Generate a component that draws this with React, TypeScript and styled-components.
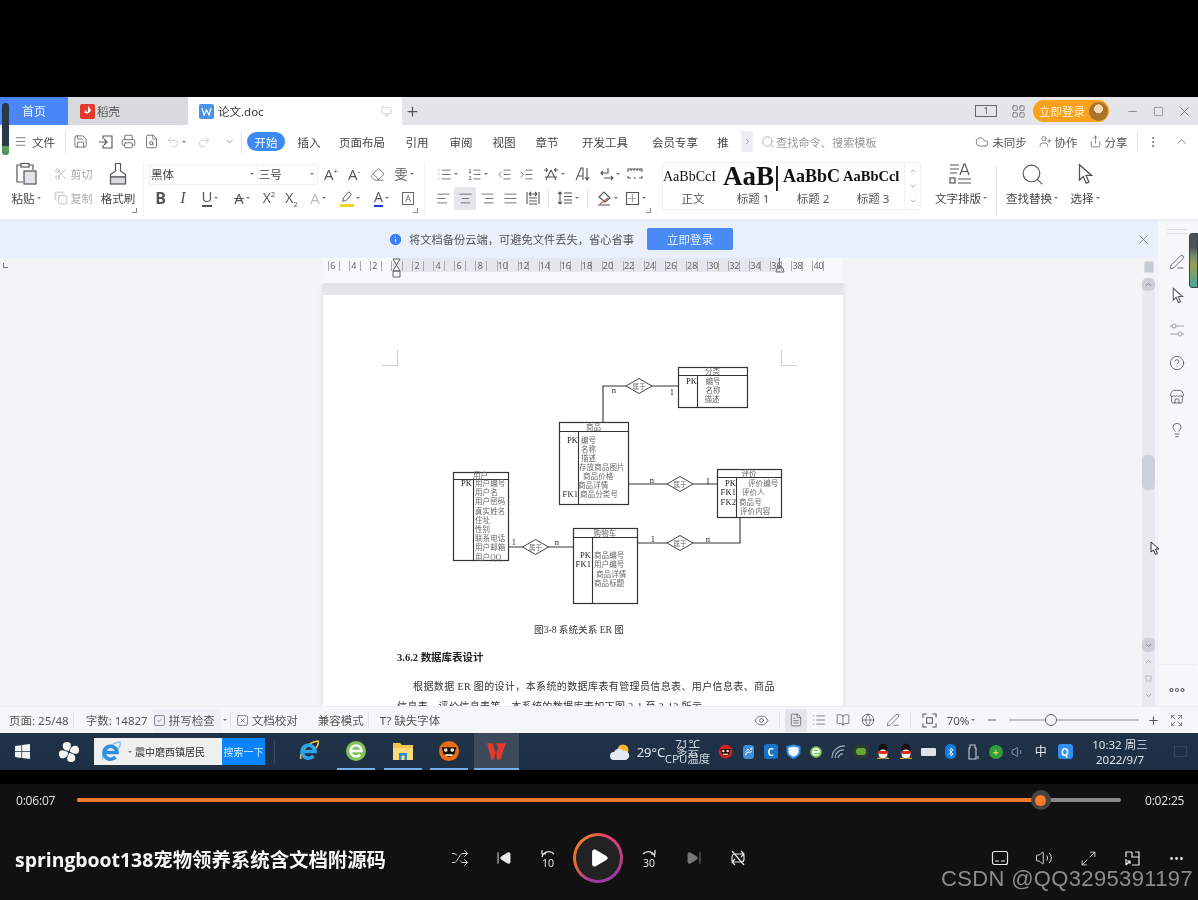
import React from 'react';
import styled, { createGlobalStyle } from 'styled-components';
import {
  Save, Printer, Undo2, Redo2, ChevronDown, Menu, Scissors, Copy, List, ListOrdered,
  IndentDecrease, IndentIncrease, AlignLeft, AlignCenter, AlignRight, AlignJustify, Eraser, Search,
  Cloud, UserPlus, Share, MoreVertical, ChevronUp, X, Plus, Minus, Monitor, LayoutGrid, Eye, FileText,
  BookOpen, Globe, PenLine, Shuffle, Volume2, Maximize2, MoreHorizontal, HelpCircle, Store,
  Lightbulb, ChevronRight, Square, FileSearch, Info, SquareCheck, SquareX, Expand, SkipBack, SkipForward, Play, Usb, Bluetooth, Volume1,
} from 'lucide-react';

const Global = createGlobalStyle`
  html, body { margin: 0; padding: 0; background: #000; }
  * { box-sizing: border-box; }
  body { font-family: "Noto Sans", "Noto Sans CJK SC", sans-serif; }
`;

const Root = styled.div`
  width: 1198px; height: 900px; overflow: hidden; display: flex; flex-direction: column;
  background: #000; position: relative; filter: blur(0.45px);
`;
const TopBlack = styled.div`height: 97px; flex: none; background: #000;`;
const AppWin = styled.div`height: 636px; flex: none; display: flex; flex-direction: column; background: #fff; color: #444; position: relative;`;

const TabBar = styled.div`height: 28px; flex: none; background: #e3e5e8; display: flex; align-items: stretch;`;
const HomeTab = styled.div`width: 68px; background: #4a86f7; color: #e9f0ff; font-size: 12px; display: flex; align-items: center; justify-content: center;`;
const GreyTab = styled.div`width: 120px; background: #d8dadd; color: #555; font-size: 11.5px; display: flex; align-items: center; gap: 2px; padding-left: 12px;`;
const DocTab = styled.div`width: 214px; background: #fff; color: #333; font-size: 11.5px; display: flex; align-items: center; gap: 4px; padding: 0 10px 0 11px;`;
const TabGrow = styled.div`flex: 1;`;
const Badge = styled.span<{ $bg: string }>`width: 15px; height: 15px; border-radius: 2px; background: ${p => p.$bg}; display: flex; align-items: center; justify-content: center; flex: none;`;
const AddTab = styled.div`width: 20px; display: flex; align-items: center; justify-content: center; color: #555;`;
const WinCell = styled.div<{ $w: number }>`width: ${p => p.$w}px; display: flex; align-items: center; justify-content: center; color: #666;`;
const LoginPill = styled.div`width: 76px; height: 22px; align-self: center; border-radius: 11px; background: #f9a11b; color: #fff3dd; font-size: 11.5px; display: flex; align-items: center; justify-content: space-between; padding: 0 1px 0 6px; margin-right: 8px;`;
const Avatar = styled.span`width: 19px; height: 19px; border-radius: 50%; background: radial-gradient(circle at 50% 36%, #f3d9ae 0 28%, #a9752d 30% 100%); display: block;`;
const VLine = styled.span<{ $h?: number; $m?: number }>`width: 1px; height: ${p => p.$h ?? 20}px; background: #e2e3e6; margin: 0 ${p => p.$m ?? 0}px; flex: none; align-self: center;`;
const FaintBox = styled.span`width: 22px; height: 12px; border: 1px solid #666; font-size: 9px; line-height: 10px; text-align: center; color: #555; display: block;`;

const ToolRow = styled.div`height: 33px; flex: none; display: flex; align-items: center; background: #fff;`;
const FileBtn = styled.div`width: 65px; display: flex; align-items: center; gap: 5px; padding-left: 14px; font-size: 11.5px; color: #444;`;
const ToolIcon = styled.div<{ $w?: number; $muted?: boolean }>`width: ${p => p.$w ?? 23}px; display: flex; align-items: center; justify-content: center; color: ${p => (p.$muted ? '#bbb' : '#555')}; flex: none;`;
const Pill = styled.div`width: 38px; height: 19px; margin-left: 3px; border-radius: 10px; background: #3d8bf2; color: #fff; font-size: 11.5px; display: flex; align-items: center; justify-content: center; flex: none;`;
const MenuTab = styled.div<{ $w: number }>`width: ${p => p.$w}px; font-size: 11.5px; color: #444; text-align: center; flex: none; white-space: nowrap;`;
const MoreBox = styled.div`width: 12px; height: 21px; background: #eceef1; color: #666; display: flex; align-items: center; justify-content: center; flex: none;`;
const SearchBox = styled.div`display: flex; align-items: center; gap: 1px; margin-left: 8px; font-size: 11.2px; color: #999; white-space: nowrap;`;
const RightTools = styled.div`margin-left: auto; display: flex; align-items: center; font-size: 11.5px; color: #555;`;
const RightAction = styled.div<{ $w: number }>`width: ${p => p.$w}px; display: flex; align-items: center; justify-content: center; gap: 3px; white-space: nowrap;`;

const Ribbon = styled.div`height: 62px; flex: none; display: flex; background: #fff; border-bottom: 1px solid #eceef1; padding-top: 4px; box-shadow: 0 1px 2px rgba(0,0,0,.04); position: relative;`;
const Group = styled.div<{ $w: number; $pl?: number; $line?: boolean; $mark?: boolean }>`
  width: ${p => p.$w}px; padding-left: ${p => p.$pl ?? 0}px; height: 54px; flex: none; position: relative;
  border-right: ${p => (p.$line ? '1px solid #eff0f2' : '0')};
  &::after { content: ''; display: ${p => (p.$mark ? 'block' : 'none')}; position: absolute; right: 6px; bottom: 3px; width: 4px; height: 4px; border-right: 1px solid #888; border-bottom: 1px solid #888; }
`;
const GroupRow = styled.div`height: 24px; display: flex; align-items: center;`;
const GroupCols = styled.div`display: flex;`;
const BigCol = styled.div<{ $w: number; $ml?: number }>`width: ${p => p.$w}px; margin-left: ${p => p.$ml ?? 0}px; display: flex; flex-direction: column; align-items: center; flex: none;`;
const BigIcon = styled.div`height: 24px; display: flex; align-items: center; justify-content: center; color: #555;`;
const BigLabel = styled.div`height: 24px; display: flex; align-items: center; font-size: 11.5px; color: #444; white-space: nowrap;`;
const Micro = styled.span`display: inline-block; width: 0; height: 0; border-left: 2px solid transparent; border-right: 2px solid transparent; border-top: 2.5px solid #777; margin-left: 2px; flex: none;`;
const SmallAct = styled.div`height: 24px; display: flex; align-items: center; gap: 3px; font-size: 11px; color: #aaa;`;
const FontBox = styled.div`width: 169px; height: 21px; border: 1px solid #eceef1; border-radius: 2px; display: flex; font-size: 11.5px; color: #444; flex: none;`;
const FontPart = styled.div<{ $w: number }>`width: ${p => p.$w}px; display: flex; align-items: center; justify-content: space-between; padding: 0 3px 0 1px; & + & { border-left: 1px solid #eceef1; }`;
const GlyphCell = styled.div<{ $w: number; $active?: boolean; $color?: string }>`
  width: ${p => p.$w}px; height: 23px; display: flex; align-items: center; justify-content: center; flex: none;
  color: ${p => p.$color ?? '#555'}; background: ${p => (p.$active ? '#e4e6ea' : 'transparent')}; border-radius: 2px;
`;
const Letter = styled.span<{ $size?: number; $weight?: number; $italic?: boolean; $under?: string; $strike?: boolean; $serif?: boolean }>`
  font-family: ${p => (p.$serif ? '"Liberation Serif", serif' : '"Open Sans", "Noto Sans CJK SC", sans-serif')};
  font-size: ${p => p.$size ?? 15}px; font-weight: ${p => p.$weight ?? 400}; font-style: ${p => (p.$italic ? 'italic' : 'normal')};
  line-height: 1; text-decoration: ${p => (p.$strike ? 'line-through' : 'none')};
  border-bottom: ${p => (p.$under ? `2px solid ${p.$under}` : '0')}; padding-bottom: ${p => (p.$under ? 1 : 0)}px;
  sup, sub { font-size: 8px; line-height: 0; }
`;
const HighlightBar = styled.span`display: flex; border-bottom: 3px solid #f2d229; line-height: 0;`;
const StyleBox = styled.div`width: 259px; height: 48px; margin-left: 5px; border: 1px solid #eef0f2; border-radius: 2px; display: flex; flex: none;`;
const StyleCard = styled.div`width: 60px; display: flex; flex-direction: column; align-items: center; flex: none;`;
const StyleSample = styled.div<{ $size: number; $bold?: boolean }>`
  height: 27px; width: 60px; white-space: nowrap; font-family: "Liberation Serif", serif; color: #111;
  font-size: ${p => p.$size}px; font-weight: ${p => (p.$bold ? 700 : 400)}; line-height: 27px; text-align: left;
`;
const StyleName = styled.div`font-size: 11.5px; color: #555; line-height: 18px;`;
const StyleScroll = styled.div`width: 16px; margin-left: auto; border-left: 1px solid #f0f1f3; display: flex; flex-direction: column; align-items: center; justify-content: space-around; color: #888;`;

const Main = styled.div`flex: 1; min-height: 0; display: flex;`;
const Work = styled.div`flex: 1; min-width: 0; display: flex; flex-direction: column; background: #f3f4f7;`;
const Notice = styled.div`height: 38px; flex: none; background: #e9f0fb; display: flex; align-items: center; font-size: 11.25px; color: #555; padding-left: 388px;`;
const NoticeText = styled.span`margin-left: 6px; white-space: nowrap;`;
const NoticeBtn = styled.div`width: 86px; height: 22px; margin-left: 13px; background: #4a8af5; border-radius: 2px; color: #e8f0ff; font-size: 11.5px; display: flex; align-items: center; justify-content: center;`;
const NoticeClose = styled.div`margin-left: auto; width: 28px; display: flex; justify-content: center; color: #777;`;
const RulerRow = styled.div`height: 25px; flex: none; display: flex; position: relative;`;
const Corner = styled.div`width: 323px; padding: 5px 0 0 3px; flex: none; &::before { content: ''; display: block; width: 4px; height: 4px; border-left: 1px solid #777; border-bottom: 1px solid #777; }`;
const RulerStrip = styled.div`
  width: 520px; flex: none; display: flex; padding-left: 5px; position: relative; height: 25px;
  background: linear-gradient(to right, transparent 70px, #e4e7ee 70px, #e4e7ee 457px, transparent 457px) no-repeat 0 0 / 100% 14px, #f7f8fa;
`;
const RulerCell = styled.div`width: 21.07px; height: 14px; padding-right: 9.5px; flex: none; font-size: 9px; line-height: 14px; color: #666;`;
const RulerNum = styled.div`height: 10px; margin-top: 3px; line-height: 9px; border-left: 1px solid #aaa; border-right: 1px solid #aaa; text-align: center; padding-right: 2px; white-space: nowrap;`;
const RulerMark = styled.svg<{ $left: number }>`position: absolute; left: ${p => p.$left}px; top: 0;`;
const RulerRight = styled.div`flex: 1; display: flex; justify-content: flex-end; padding: 3px 3px 0 0;`;
const ScrollTop = styled.div`width: 10px; height: 12px; background: #c7ccd4; border: 1px solid #d8dbe0; border-radius: 1px;`;

const DocRow = styled.div`flex: 1; min-height: 0; display: flex;`;
const DocArea = styled.div`flex: 1; min-width: 0; padding-left: 323px; overflow: hidden;`;
const PageShadow = styled.div`width: 520px; height: 100%; display: flex; flex-direction: column; box-shadow: 0 0 5px rgba(0,0,0,.12);`;
const PageGap = styled.div`height: 12px; flex: none; background: linear-gradient(#dfe1e3, #e6e7e9);`;
const Page = styled.div`flex: 1; min-height: 0; background: #fff; overflow: hidden; position: relative; font-family: "Liberation Serif", "Noto Sans CJK SC", serif; color: #333;`;
const MarginRow = styled.div`display: flex; justify-content: space-between; padding: 55px 46px 0 59px; height: 71px;`;
const MarginMark = styled.span<{ $right?: boolean }>`
  width: 16px; height: 16px; display: block; border-bottom: 1px solid #ccc;
  border-right: ${p => (p.$right ? '0' : '1px solid #ccc')}; border-left: ${p => (p.$right ? '1px solid #ccc' : '0')};
`;
const ERWrap = styled.svg`display: block; margin-left: 117px; margin-top: -11px;`;
const Caption = styled.div`text-align: center; font-size: 9.6px; line-height: 14px; margin-top: 8px; padding-right: 8px; color: #333;`;
const Heading = styled.div`font-size: 10.5px; font-weight: 700; line-height: 14px; margin: 14px 0 0 74px; color: #222;`;
const Para = styled.div`font-size: 10px; line-height: 20px; margin: 12px 60px 0 74px; text-indent: 16px; color: #333; letter-spacing: .38px;`;

const Scroller = styled.div`width: 15px; flex: none; padding-right: 2px; display: flex; flex-direction: column; align-items: center; background: #f3f4f7;`;
const Track = styled.div`width: 13px; flex: 1; min-height: 0; background: #e6e8ee; display: flex; flex-direction: column; padding-bottom: 4px;`;
const Thumb = styled.div<{ $h: number; $mt?: number }>`height: ${p => p.$h}px; margin-top: ${p => p.$mt ?? 0}px; background: #ccd0d8; border-radius: 5px; color: #888; display: flex; align-items: center; justify-content: center; flex: none;`;
const StepIcon = styled.div<{ $mt: number }>`margin-top: ${p => p.$mt}px; height: 10px; color: #888; display: flex; align-items: center; justify-content: center; flex: none;`;

const SidePanel = styled.div`width: 41px; flex: none; background: #f6f7f9; border-left: 1px solid #eeeff2; display: flex; flex-direction: column; align-items: center; color: #555; padding-top: 9px; padding-right: 2px;`;
const Grip = styled.div`width: 20px; height: 5px; border-top: 1px solid #ddd; border-bottom: 1px solid #ddd;`;
const SideBtn = styled.div<{ $mt: number; $light?: boolean }>`margin-top: ${p => p.$mt}px; height: 18px; display: flex; align-items: center; justify-content: center; color: ${p => (p.$light ? '#999' : '#555')};`;
const SideFoot = styled.div`margin-top: auto; width: 100%; height: 42px; border-top: 1px solid #eceef1; display: flex; align-items: center; justify-content: center; color: #666; padding-top: 8px;`;
const Meter = styled.div`position: absolute; right: 0; top: 136px; width: 9px; height: 55px; border-radius: 3px 0 0 3px; background: linear-gradient(#4c5358 0 25%, #6f8a6c 40%, #99a050 60%, #56a58f 90%); border: 1px solid #3d4246;`;
const LeftMeter = styled.div`position: absolute; left: 2px; top: 6px; width: 7px; height: 52px; border-radius: 3px; background: linear-gradient(#2b3846 0 82%, #5fa65e 84%, #4c8b4d 100%);`;
const Pointer = styled.svg`position: absolute; left: 1150px; top: 444px;`;

const StatusBar = styled.div`height: 27px; flex: none; background: #f5f6f8; display: flex; align-items: center; font-size: 11.5px; color: #555; padding-left: 9px; border-top: 1px solid #eceef1;`;
const StatusText = styled.span<{ $ml?: number }>`margin-left: ${p => p.$ml ?? 0}px; white-space: nowrap; display: flex; align-items: center; gap: 3px;`;
const StatusHot = styled.div`margin-left: 5px; height: 23px; width: 68px; background: #edf1f7; display: flex; align-items: center; gap: 3px; white-space: nowrap; flex: none;`;
const StatusRight = styled.div`margin-left: auto; padding-right: 9px; display: flex; align-items: center; color: #555;`;
const StatusIcon = styled.div<{ $w: number; $active?: boolean }>`width: ${p => p.$w}px; height: 23px; display: flex; align-items: center; justify-content: center; flex: none; border-radius: 2px; background: ${p => (p.$active ? '#e2e5ea' : 'transparent')};`;
const SliderRail = styled.div`width: 130px; height: 2px; background: #bfc2c7; margin: 0 4px; position: relative; flex: none;`;
const SliderKnob = styled.span`position: absolute; left: 36px; top: -5px; width: 12px; height: 12px; border-radius: 50%; background: #f5f6f8; border: 1px solid #666;`;

const Taskbar = styled.div`height: 37px; flex: none; background: linear-gradient(#1f3248, #203044); display: flex; align-items: stretch; color: #e8edf3;`;
const TaskCell = styled.div<{ $w: number }>`width: ${p => p.$w}px; flex: none; display: flex; align-items: center; justify-content: center;`;
const TaskSearch = styled.div`width: 171px; height: 27px; align-self: center; margin-left: 1px; display: flex; flex: none; font-size: 10px;`;
const TaskInput = styled.div`width: 128px; background: #f0f0f0; color: #333; display: flex; align-items: center; gap: 3px; padding-left: 5px; white-space: nowrap;`;
const TaskGo = styled.div`flex: 1; background: #0a84ff; color: #d8ecff; display: flex; align-items: center; justify-content: center; white-space: nowrap;`;
const TaskDiv = styled.span`width: 1px; height: 22px; align-self: center; background: #3b4c60; margin: 0 15px 0 9px; flex: none;`;
const AppSlot = styled.div<{ $w: number; $ml?: number; $line?: boolean; $active?: boolean }>`
  width: ${p => p.$w}px; margin-left: ${p => p.$ml ?? 0}px; flex: none; display: flex; align-items: center; justify-content: center;
  border-bottom: 2px solid ${p => (p.$line ? '#6fb0e8' : 'transparent')}; background: ${p => (p.$active ? '#3d4a5a' : 'transparent')};
`;
const TaskRight = styled.div`margin-left: auto; display: flex; align-items: stretch;`;
const Temp = styled.div`width: 37px; font-size: 13px; display: flex; align-items: center; justify-content: center; white-space: nowrap; color: #dfe5ec; flex: none;`;
const WeatherStack = styled.div`width: 36px; margin-right: 9px; flex: none; display: flex; flex-direction: column; align-items: center; justify-content: center; font-size: 11.5px; line-height: 7.5px; color: #cfd6de; white-space: nowrap;`;
const TrayCell = styled.div`width: 22.5px; display: flex; align-items: center; justify-content: center; flex: none;`;
const Clock = styled.div`width: 84px; font-size: 11.5px; line-height: 15px; text-align: center; color: #dfe5ec; display: flex; flex-direction: column; justify-content: center; flex: none; white-space: nowrap;`;
const DeskBtn = styled.div`width: 36px; display: flex; align-items: center; justify-content: center; flex: none; &::before { content: ''; width: 11px; height: 9px; border: 1px solid #33465a; }`;

const BlackGap = styled.div`height: 14px; flex: none; background: #000;`;
const Player = styled.div`flex: 1; min-height: 0; background: #111; display: flex; flex-direction: column; color: #eee;`;
const ProgressRow = styled.div`height: 32px; flex: none; display: flex; align-items: center; font-family: "Open Sans", sans-serif; font-size: 12px; letter-spacing: -.2px; color: #e4e4e4;`;
const TimeLeft = styled.div`width: 77px; padding-left: 16px; flex: none;`;
const Bar = styled.div`width: 1044px; height: 4px; border-radius: 2px; background: #888; flex: none; display: flex; align-items: center;`;
const Fill = styled.div`height: 4px; border-radius: 2px; background: #ff7a2b; flex: none;`;
const Knob = styled.div`width: 20px; height: 20px; border-radius: 50%; margin-left: -9px; background: #444; display: flex; align-items: center; justify-content: center; flex: none; &::after { content: ''; width: 11px; height: 11px; border-radius: 50%; background: #ff7a2b; }`;
const TimeRight = styled.div`margin-left: 24px; flex: none; white-space: nowrap;`;
const ControlRow = styled.div`flex: 1; display: flex; align-items: center;`;
const Title = styled.div`width: 438px; padding-left: 15px; flex: none; font-size: 19.4px; font-weight: 700; color: #f6f6f6; white-space: nowrap; font-family: "Open Sans", "Noto Sans CJK SC", sans-serif;`;
const Ctl = styled.div<{ $w?: number; $dim?: boolean }>`width: ${p => p.$w ?? 44}px; flex: none; display: flex; align-items: center; justify-content: center; color: ${p => (p.$dim ? '#777' : '#e8e8e8')};`;
const PlayRing = styled.div`width: 50px; height: 50px; border-radius: 50%; background: conic-gradient(from 20deg, #e0436a, #a23a9f 35%, #a23a9f 50%, #e86a2a 65%, #f08030 85%, #e0436a); display: flex; align-items: center; justify-content: center;`;
const PlayCore = styled.div`width: 44px; height: 44px; border-radius: 50%; background: #222; display: flex; align-items: center; justify-content: center; color: #fff; padding-left: 2px;`;
const ControlRight = styled.div`margin-left: auto; display: flex;`;
const Watermark = styled.div`position: absolute; right: 5px; bottom: 7px; font-family: "Liberation Sans", sans-serif; font-size: 22px; line-height: 28px; color: #8c8c8c; letter-spacing: .35px; white-space: nowrap;`;
const Rounded = styled.span<{ $bg: string; $w?: number; $h?: number; $r?: number; $fg?: string }>`
  width: ${p => p.$w ?? 15}px; height: ${p => p.$h ?? 15}px; background: ${p => p.$bg}; border-radius: ${p => p.$r ?? 3}px;
  display: flex; align-items: center; justify-content: center; color: ${p => p.$fg ?? '#fff'}; font-size: 10px; font-weight: 700; flex: none;
`;
const FaintABox = styled.span`width: 12px; height: 13px; border: 1px solid #666; font-size: 9px; line-height: 11px; text-align: center; color: #666; display: block; font-family: "Open Sans", sans-serif;`;

const S = 1.25;
const Line = ({ d, s = 16, w = 1.1, c = 'currentColor', vb = 16 }: { d: string; s?: number; w?: number; c?: string; vb?: number }) => (
  <svg width={s} height={s} viewBox={`0 0 ${vb} ${vb}`} fill="none" stroke={c} strokeWidth={w}><path d={d} /></svg>
);
const Arrow = ({ s = 20, c = '#555' }: { s?: number; c?: string }) => (
  <svg width={s} height={s} viewBox="0 0 20 20" fill="none" stroke={c} strokeWidth="1.2"><path d="M5 1.500v14l3.500-3.200 2.500 6 2.500-1-2.500-6h5z" /></svg>
);
const PasteIcon = () => (
  <svg width="23" height="24" viewBox="0 0 23 24" fill="none" stroke="#555" strokeWidth="1.2">
    <path d="M6 3H2v17h6M14 3h4v5" /><rect x="6" y="1.500" width="8" height="3.500" />
    <rect x="9" y="9" width="12" height="13" fill="#e2e3e6" />
  </svg>
);
const BrushIcon = () => (
  <svg width="22" height="24" viewBox="0 0 22 24" fill="none" stroke="#555" strokeWidth="1.2">
    <path d="M8.500 1.500h5V9l5 3.500V15h-15v-2.500L8.500 9z" /><rect x="3.500" y="15" width="15" height="7" fill="#d8d9dc" />
  </svg>
);
const TextLayout = () => (
  <svg width="26" height="24" viewBox="0 0 26 24" fill="none" stroke="#555" strokeWidth="1.2">
    <path d="M2 3h9M2 7h9M2 11h7M12 13l4-11h1l4 11M13.500 9.500h6M10 17h13M10 21h13" /><rect x="2" y="16" width="5" height="5" />
  </svg>
);
const Seek = ({ label, flip }: { label: string; flip?: boolean }) => (
  <svg width="22" height="24" viewBox="0 0 22 24" fill="none" stroke="currentColor" strokeWidth="1.2">
    <g transform={flip ? 'matrix(-1 0 0 1 22 0)' : undefined}>
      <path d="M5 11a7 7 0 0 1 12-3M5 4v4h4" />
    </g>
    <text x="11" y="21" textAnchor="middle" fontSize="10.5" fill="currentColor" stroke="none" fontFamily="Open Sans, sans-serif">{label}</text>
  </svg>
);
const WpsW = ({ s = 14, c = '#e5392b' }: { s?: number; c?: string }) => (
  <svg width={s} height={s} viewBox="0 0 20 20"><path d="M1 3h5l3 10 2-6-2-4h9l-5 15h-3L9 11 7 18H5z" fill={c} /></svg>
);
const IEIcon = ({ c = '#2ea5e8', ring = '#f5c243' }: { c?: string; ring?: string }) => (
  <svg width="24" height="24" viewBox="0 0 24 24" fill="none">
    <path d="M4 20C2 14 11 3 21 2c1 3-1 6-3 8" stroke={ring} strokeWidth="1.6" />
    <path d="M6 12.500h12a6.500 6.500 0 1 0-1.600 4.500" stroke={c} strokeWidth="3.600" />
  </svg>
);
const GreenE = ({ s = 24 }: { s?: number }) => (
  <svg width={s} height={s} viewBox="0 0 24 24" fill="none">
    <circle cx="12" cy="12" r="10" fill="#7fc65a" />
    <path d="M6.500 12h11a5.500 5.500 0 1 0-1.400 3.600" stroke="#fff" strokeWidth="2.400" />
  </svg>
);
const Folder = () => (
  <svg width="22" height="20" viewBox="0 0 22 20"><path d="M1 2h7l2 2h11v15H1z" fill="#f5c64f" /><path d="M1 7h20v12H1z" fill="#ffdb7a" /><rect x="7" y="12" width="8" height="7" fill="#2f88d8" /><rect x="9.500" y="14.500" width="3" height="4.500" fill="#ffdb7a" /></svg>
);
const Bandit = ({ s = 22, bg = '#ea6a13' }: { s?: number; bg?: string }) => (
  <svg width={s} height={s} viewBox="0 0 24 24"><circle cx="12" cy="12" r="11" fill={bg} /><path d="M4 8h16l-2 7q-6 7-12 0z" fill="#111" /><circle cx="8.500" cy="11" r="2" fill="#f4e4c8" /><circle cx="15.500" cy="11" r="2" fill="#f4e4c8" /><rect x="8" y="15.500" width="8" height="2" fill="#f4e4c8" /></svg>
);
const Penguin = () => (
  <svg width="14" height="17" viewBox="0 0 14 17"><ellipse cx="7" cy="6" rx="4.500" ry="5.500" fill="#111" /><ellipse cx="7" cy="11" rx="4.500" ry="4.500" fill="#f2f2f2" /><path d="M1 15l4-1v2H1zM13 15l-4-1v2h4z" fill="#e0a020" /><path d="M2.500 8h9l1 2-3 1H4.500l-3-1z" fill="#d93025" /></svg>
);
const WifiFan = () => (
  <svg width="17" height="15" viewBox="0 0 17 15" fill="none" stroke="#a4afba" strokeWidth="1.2"><path d="M2 14a12 12 0 0 1 13-12M5 14a8 8 0 0 1 9-8M8 14a4.500 4.500 0 0 1 5-4" /></svg>
);

const ERText = ({ x, y, t, a, s, dark }: { x: number; y: number; t: string; a?: 'middle' | 'end'; s?: number; dark?: boolean }) => (
  <text x={x} y={y} fontSize={s ?? 7.5} textAnchor={a} fill={dark ? '#222' : '#666'} fontFamily="Liberation Serif, Noto Sans CJK SC, serif" letterSpacing=".1">{t}</text>
);

// diagram coordinates equal page coordinates minus (440, 355)
const boxes = [
  { x: 238, y: 12, w: 69, h: 40, head: 8, v: 19, title: '分类' },
  { x: 119, y: 67, w: 69, h: 82, head: 9, v: 19, title: '商品' },
  { x: 13, y: 117, w: 55, h: 88, head: 7, v: 20, title: '用户' },
  { x: 133, y: 173, w: 64, h: 75, head: 9, v: 19, title: '购物车' },
  { x: 277, y: 114, w: 64, h: 48, head: 8, v: 19, title: '评价' },
];
const diamonds = [{ x: 199, y: 31 }, { x: 240, y: 129 }, { x: 95.5, y: 192 }, { x: 240, y: 188 }];
const wires = ['M163 67V31H186M212 31H238', 'M188 129H228M253 129H277', 'M68 192H83M108 192H133', 'M197 188H228M253 188H300V162'];
type L = [number, number, string, ('middle' | 'end')?];
const erKeys: L[] = [
  [257, 29, 'PK', 'end'], [138, 88, 'PK', 'end'], [138, 142, 'FK1', 'end'], [32, 131, 'PK', 'end'],
  [151, 203, 'PK', 'end'], [151, 212, 'FK1', 'end'], [296, 131, 'PK', 'end'], [296, 140, 'FK1', 'end'], [296, 150, 'FK2', 'end'],
  [174, 38, 'n', 'middle'], [232, 40, '1', 'middle'], [212, 128, 'n', 'middle'], [268, 129, '1', 'middle'],
  [74, 190, '1', 'middle'], [117, 190, 'n', 'middle'], [213, 187, '1', 'middle'], [268, 187, 'n', 'middle'],
];
const erRows: L[] = [
  [273, 29, '编号', 'middle'], [273, 38, '名称', 'middle'], [272, 47, '描述', 'middle'],
  [141, 88, '编号'], [141, 97, '名称'], [141, 106, '描述'], [139, 115, '存放商品图片'], [143, 124, '商品价格'], [138, 133, '商品详情'], [140, 142, '商品分类号'],
  [35, 131, '用户编号'], [35, 140, '用户名'], [35, 149, '用户密码'], [35, 159, '真实姓名'], [35, 168, '住址'], [35, 177, '性别'], [35, 186, '联系电话'], [35, 195, '用户邮箱'], [35, 205, '用户QQ'],
  [154, 203, '商品编号'], [154, 212, '用户编号'], [156, 222, '商品详情'], [154, 231, '商品标题'],
  [308, 131, '评价编号'], [302, 140, '评价人'], [299, 150, '商品号'], [300, 159, '评价内容'],
];

const ER = () => (
  <ERWrap width="350" height="260" viewBox="0 0 350 260" fill="none">
    {wires.map(d => <path key={d} d={d} stroke="#333" strokeWidth="1.1" />)}
    {boxes.map(b => (
      <g key={b.title}>
        <rect x={b.x + .5} y={b.y + .5} width={b.w} height={b.h} stroke="#333" strokeWidth="1.2" fill="#fff" />
        <path d={`M${b.x} ${b.y + b.head + .5}H${b.x + b.w}M${b.x + b.v + .5} ${b.y + b.head}V${b.y + b.h}`} stroke="#333" strokeWidth="1.1" />
        <ERText x={b.x + b.w / 2} y={b.y + b.head - 1} t={b.title} a="middle" />
      </g>
    ))}
    {diamonds.map(d => (
      <g key={d.x + '-' + d.y}>
        <path d={`M${d.x - 13} ${d.y}L${d.x} ${d.y - 7.5}L${d.x + 13} ${d.y}L${d.x} ${d.y + 7.5}Z`} stroke="#444" fill="#fff" />
        <ERText x={d.x} y={d.y + 2.5} t="属于" a="middle" s={6.5} />
      </g>
    ))}
    {erRows.map(([x, y, t, a]) => <ERText key={`${x}-${y}-${t}`} x={x} y={y} t={t} a={a} />)}
    {erKeys.map(([x, y, t, a]) => <ERText key={`${x}-${y}-${t}`} x={x} y={y} t={t} a={a} s={8.5} dark />)}
  </ERWrap>
);

const rulerNums = ['6', '4', '2', '', '2', '4', '6', '8', '10', '12', '14', '16', '18', '20', '22', '24', '26', '28', '30', '32', '34', '36', '38', '40'];
const tabs: [string, number][] = [['插入', 48], ['页面布局', 58], ['引用', 52], ['审阅', 36], ['视图', 50], ['章节', 36], ['开发工具', 80], ['会员专享', 60], ['推', 36]];

export default function App() {
  return (
    <>
      <Global />
      <Root>
        <TopBlack />
        <AppWin>
          <TabBar>
            <HomeTab>首页</HomeTab>
            <GreyTab>
              <Badge $bg="#e5392b"><svg width="9" height="11" viewBox="0 0 9 11"><path d="M5 0v6a2 2 0 0 1-2-2L1 6a4 4 0 0 0 7-2z" fill="#fff" /></svg></Badge>
              稻壳
            </GreyTab>
            <DocTab>
              <Badge $bg="#4a92ea"><svg width="11" height="9" viewBox="0 0 11 9" fill="none" stroke="#fff" strokeWidth="1.2"><path d="M1 1l2 7 2.500-5L8 8l2-7" /></svg></Badge>
              论文.doc
              <TabGrow />
              <Monitor size={11} strokeWidth={S} color="#bbb" />
            </DocTab>
            <AddTab><Plus size={15} strokeWidth={2} /></AddTab>
            <TabGrow />
            <WinCell $w={36}><FaintBox>1</FaintBox></WinCell>
            <WinCell $w={29}><LayoutGrid size={15} strokeWidth={S} /></WinCell>
            <LoginPill>立即登录<Avatar /></LoginPill>
            <VLine $h={18} />
            <WinCell $w={29}><Minus size={13} strokeWidth={S} /></WinCell>
            <WinCell $w={23}><Square size={11} strokeWidth={S} /></WinCell>
            <WinCell $w={28}><X size={15} strokeWidth={S} /></WinCell>
          </TabBar>
          <ToolRow>
            <FileBtn><Menu size={13} strokeWidth={S} />文件</FileBtn>
            <VLine $h={22} />
            <ToolIcon $w={28}><Save size={15} strokeWidth={S} /></ToolIcon>
            <ToolIcon $w={23}><Line d="M5 5V2h9v12H5v-3M1 8h8M6 5l3 3-3 3" /></ToolIcon>
            <ToolIcon $w={23}><Printer size={15} strokeWidth={S} /></ToolIcon>
            <ToolIcon $w={23}><FileSearch size={15} strokeWidth={S} /></ToolIcon>
            <ToolIcon $w={26} $muted><Undo2 size={14} strokeWidth={S} /><Micro /></ToolIcon>
            <ToolIcon $w={30} $muted><Redo2 size={14} strokeWidth={S} /></ToolIcon>
            <ToolIcon $w={20}><ChevronDown size={11} strokeWidth={S} /></ToolIcon>
            <VLine $h={22} $m={2} />
            <Pill>开始</Pill>
            {tabs.map(([t, w]) => <MenuTab key={t} $w={w}>{t}</MenuTab>)}
            <MoreBox><ChevronRight size={9} strokeWidth={1.5} /></MoreBox>
            <SearchBox><Search size={14} strokeWidth={S} />查找命令、搜索模板</SearchBox>
            <RightTools>
              <RightAction $w={64}><Cloud size={14} strokeWidth={S} />未同步</RightAction>
              <RightAction $w={50}><UserPlus size={13} strokeWidth={S} />协作</RightAction>
              <RightAction $w={50}><Share size={13} strokeWidth={S} />分享</RightAction>
              <VLine $h={20} $m={4} />
              <RightAction $w={22}><MoreVertical size={14} strokeWidth={S} /></RightAction>
              <RightAction $w={34}><ChevronUp size={15} strokeWidth={S} /></RightAction>
            </RightTools>
          </ToolRow>
          <Ribbon>
            <Group $w={144} $line $mark>
              <GroupCols>
                <BigCol $w={32} $ml={10}><BigIcon><PasteIcon /></BigIcon><BigLabel>粘贴<Micro /></BigLabel></BigCol>
                <BigCol $w={56} $ml={3}>
                  <SmallAct><Scissors size={14} strokeWidth={S} />剪切</SmallAct>
                  <SmallAct><Copy size={14} strokeWidth={S} />复制</SmallAct>
                </BigCol>
                <BigCol $w={34}><BigIcon><BrushIcon /></BigIcon><BigLabel>格式刷</BigLabel></BigCol>
              </GroupCols>
            </Group>
            <Group $w={281} $pl={5} $line $mark>
              <GroupRow>
                <FontBox>
                  <FontPart $w={108}>黑体<Micro /></FontPart>
                  <FontPart $w={61}>三号<Micro /></FontPart>
                </FontBox>
                <GlyphCell $w={26}><Letter $size={15}>A<sup>+</sup></Letter></GlyphCell>
                <GlyphCell $w={20}><Letter $size={15}>A<sup>-</sup></Letter></GlyphCell>
                <GlyphCell $w={26}><Eraser size={15} strokeWidth={S} /></GlyphCell>
                <GlyphCell $w={28}><Letter $size={13}>雯</Letter><Micro /></GlyphCell>
              </GroupRow>
              <GroupRow>
                <GlyphCell $w={23}><Letter $size={16} $weight={700}>B</Letter></GlyphCell>
                <GlyphCell $w={22}><Letter $size={16} $italic $serif>I</Letter></GlyphCell>
                <GlyphCell $w={32}><Letter $size={15} $under="#555">U</Letter><Micro /></GlyphCell>
                <GlyphCell $w={32}><Letter $size={15} $strike>A</Letter><Micro /></GlyphCell>
                <GlyphCell $w={22}><Letter $size={14}>X<sup>2</sup></Letter></GlyphCell>
                <GlyphCell $w={23}><Letter $size={14}>X<sub>2</sub></Letter></GlyphCell>
                <GlyphCell $w={30} $color="#bbb"><Letter $size={15}>A</Letter><Micro /></GlyphCell>
                <GlyphCell $w={33}><HighlightBar><Line s={14} d="M3 13l1-4 6-7 3 3-6 7z" /></HighlightBar><Micro /></GlyphCell>
                <GlyphCell $w={31}><Letter $size={14} $under="#1f3bd6">A</Letter><Micro /></GlyphCell>
                <GlyphCell $w={22}><FaintABox>A</FaintABox></GlyphCell>
              </GroupRow>
            </Group>
            <Group $w={232} $pl={7} $mark>
              <GroupRow>
                <GlyphCell $w={30}><List size={15} strokeWidth={S} /><Micro /></GlyphCell>
                <GlyphCell $w={31}><ListOrdered size={15} strokeWidth={S} /><Micro /></GlyphCell>
                <GlyphCell $w={22}><IndentDecrease size={15} strokeWidth={S} /></GlyphCell>
                <GlyphCell $w={23}><IndentIncrease size={15} strokeWidth={S} /></GlyphCell>
                <GlyphCell $w={32}><Line d="M8 4L3 14M8 4l5 10M2 11h12M1 4h3M3 2l1.500 2L3 6M15 4h-3M13 2l-1.500 2L13 6" /><Micro /></GlyphCell>
                <GlyphCell $w={23}><Line d="M2 14L7 2h2v12M3.500 10h5.500M13 2v12M11 11l2 3 2-3" /></GlyphCell>
                <GlyphCell $w={32}><Line d="M10 2v5H3M5 5L3 7l2 2M6 12h9M13 10l2 2-2 2" /><Micro /></GlyphCell>
                <GlyphCell $w={20}><Line d="M1 6V3h14v3M4 3v2M7 3v2M10 3v2M13 3v2M1 10v2h3M15 10v2h-3M7 12h2" /></GlyphCell>
              </GroupRow>
              <GroupRow>
                <GlyphCell $w={22}><AlignLeft size={15} strokeWidth={S} /></GlyphCell>
                <GlyphCell $w={22} $active><AlignCenter size={15} strokeWidth={S} /></GlyphCell>
                <GlyphCell $w={23}><AlignRight size={15} strokeWidth={S} /></GlyphCell>
                <GlyphCell $w={23}><AlignJustify size={15} strokeWidth={S} /></GlyphCell>
                <GlyphCell $w={22}><Line d="M2 2v12M14 2v12M4 8h8M4 11h8M4 14h8M4 4h8M4 4l2-2M4 4l2 2M12 4l-2-2M12 4l-2 2" /></GlyphCell>
                <VLine $h={18} $m={4} />
                <GlyphCell $w={30}><Line d="M3 2v12M1 4l2-2 2 2M1 12l2 2 2-2M7 3h8M7 6.500h8M7 10h8M7 13h8" /><Micro /></GlyphCell>
                <VLine $h={18} $m={4} />
                <GlyphCell $w={29}><svg width="16" height="16" viewBox="0 0 16 16" fill="none" stroke="#555" strokeWidth="1.100"><path d="M8 2l6 6-5 4-6-5zM2 15h12" /><path d="M4 14l8-6" stroke="#d85a5a" /></svg><Micro /></GlyphCell>
                <GlyphCell $w={29}><svg width="15" height="15" viewBox="0 0 15 15" fill="none" stroke="#555" strokeWidth="1.100"><rect x="1.500" y="1.500" width="12" height="12" /><path d="M7.500 3.500v8M3.500 7.500h8" strokeDasharray="1 1" /></svg><Micro /></GlyphCell>
              </GroupRow>
            </Group>
            <StyleBox>
              <StyleCard><StyleSample $size={14}>AaBbCcI</StyleSample><StyleName>正文</StyleName></StyleCard>
              <StyleCard><StyleSample $size={27} $bold>AaB|</StyleSample><StyleName>标题 1</StyleName></StyleCard>
              <StyleCard><StyleSample $size={18} $bold>AaBbC</StyleSample><StyleName>标题 2</StyleName></StyleCard>
              <StyleCard><StyleSample $size={14.5} $bold>AaBbCcl</StyleSample><StyleName>标题 3</StyleName></StyleCard>
              <StyleScroll><ChevronUp size={8} /><ChevronDown size={8} /><ChevronDown size={8} /></StyleScroll>
            </StyleBox>
            <BigCol $w={70} $ml={5}><BigIcon><TextLayout /></BigIcon><BigLabel>文字排版<Micro /></BigLabel></BigCol>
            <VLine $h={50} />
            <BigCol $w={62} $ml={4}><BigIcon><Search size={25} strokeWidth={1.1} /></BigIcon><BigLabel>查找替换<Micro /></BigLabel></BigCol>
            <BigCol $w={40} $ml={2}><BigIcon><Arrow s={22} /></BigIcon><BigLabel>选择<Micro /></BigLabel></BigCol>
          </Ribbon>
          <Main>
            <Work>
              <Notice>
                <Info size={15} fill="#3d7ff0" color="#fff" strokeWidth={1.6} />
                <NoticeText>将文档备份云端，可避免文件丢失，省心省事</NoticeText>
                <NoticeBtn>立即登录</NoticeBtn>
                <NoticeClose><X size={15} strokeWidth={S} /></NoticeClose>
              </Notice>
              <RulerRow>
                <Corner />
                <RulerStrip>
                  {rulerNums.map((n, i) => <RulerCell key={i}><RulerNum>{n}</RulerNum></RulerCell>)}
                  <RulerMark $left={69} width="10" height="20" viewBox="0 0 10 20" fill="#f7f8fa" stroke="#666"><path d="M1 1h7l-3.500 6zM1 13l3.500-6L8 13zM1 13h7v6H1z" /></RulerMark>
                  <RulerMark $left={452} width="10" height="15" viewBox="0 0 10 15" fill="none" stroke="#666"><path d="M4.500 0v10M1 14l1-4 3-2 3 2 1 4z" /></RulerMark>
                </RulerStrip>
                <RulerRight><ScrollTop /></RulerRight>
              </RulerRow>
              <DocRow>
                <DocArea>
                  <PageShadow>
                    <PageGap />
                    <Page>
                      <MarginRow><MarginMark /><MarginMark $right /></MarginRow>
                      <ER />
                      <Caption>图3-8 系统关系 ER 图</Caption>
                      <Heading>3.6.2 数据库表设计</Heading>
                      <Para>根据数据 ER 图的设计，本系统的数据库表有管理员信息表、用户信息表、商品<br />信息表、评价信息表等，本系统的数据库表如下图 3-1 至 3-12 所示。</Para>
                    </Page>
                  </PageShadow>
                </DocArea>
                <Scroller>
                  <Track>
                    <Thumb $h={13} $mt={-5}><ChevronUp size={9} strokeWidth={2.5} /></Thumb>
                    <Thumb $h={35} $mt={164} />
                    <Thumb $h={14} $mt={148}><ChevronDown size={9} strokeWidth={2.5} /></Thumb>
                    <StepIcon $mt={4}><ChevronUp size={9} strokeWidth={2} /></StepIcon>
                    <StepIcon $mt={7}><Square size={7} strokeWidth={1.5} /></StepIcon>
                    <StepIcon $mt={7}><ChevronDown size={9} strokeWidth={2} /></StepIcon>
                  </Track>
                </Scroller>
              </DocRow>
            </Work>
            <SidePanel>
              <Grip />
              <SideBtn $mt={19}><PenLine size={16} strokeWidth={S} /></SideBtn>
              <SideBtn $mt={15}><Arrow s={17} /></SideBtn>
              <SideBtn $mt={17} $light><Line d="M1 4h2M7 4h8M1 12h8M13 12h2M3 4a2 2 0 1 0 4 0 2 2 0 1 0-4 0M9 12a2 2 0 1 0 4 0 2 2 0 1 0-4 0" w={.9} /></SideBtn>
              <SideBtn $mt={15}><HelpCircle size={16} strokeWidth={S} /></SideBtn>
              <SideBtn $mt={16}><Store size={16} strokeWidth={S} /></SideBtn>
              <SideBtn $mt={15}><Lightbulb size={16} strokeWidth={S} /></SideBtn>
              <SideFoot><Line s={18} vb={18} w={1.2} d="M2 9a1.500 1.500 0 1 0 3 0 1.500 1.500 0 1 0-3 0M7.500 9a1.500 1.500 0 1 0 3 0 1.500 1.500 0 1 0-3 0M13 9a1.500 1.500 0 1 0 3 0 1.500 1.500 0 1 0-3 0" /></SideFoot>
            </SidePanel>
          </Main>
          <StatusBar>
            <StatusText>页面: 25/48</StatusText>
            <VLine $h={16} $m={4} />
            <StatusText $ml={8}>字数: 14827</StatusText>
            <StatusHot><SquareCheck size={13} strokeWidth={S} />拼写检查</StatusHot>
            <Micro />
            <VLine $h={16} $m={3} />
            <StatusText $ml={2}><SquareX size={13} strokeWidth={S} />文档校对</StatusText>
            <StatusText $ml={20}>兼容模式</StatusText>
            <VLine $h={16} $m={4} />
            <StatusText $ml={7}>T?<span>缺失字体</span></StatusText>
            <StatusRight>
              <StatusIcon $w={26}><Eye size={15} strokeWidth={S} /></StatusIcon>
              <VLine $h={16} $m={5} />
              <StatusIcon $w={22} $active><FileText size={14} strokeWidth={S} /></StatusIcon>
              <StatusIcon $w={24}><List size={14} strokeWidth={S} /></StatusIcon>
              <StatusIcon $w={24}><BookOpen size={14} strokeWidth={S} /></StatusIcon>
              <StatusIcon $w={25}><Globe size={14} strokeWidth={S} /></StatusIcon>
              <StatusIcon $w={25}><PenLine size={14} strokeWidth={S} /></StatusIcon>
              <VLine $h={16} $m={5} />
              <StatusIcon $w={27}><Line s={15} d="M1 5V1h4M11 1h4v4M15 11v4h-4M5 15H1v-4M5 5h6v6H5z" /></StatusIcon>
              <StatusIcon $w={36}>70%<Micro /></StatusIcon>
              <StatusIcon $w={26}><Minus size={12} strokeWidth={2} /></StatusIcon>
              <SliderRail><SliderKnob /></SliderRail>
              <StatusIcon $w={20}><Plus size={13} strokeWidth={2} /></StatusIcon>
              <StatusIcon $w={26}><Expand size={13} strokeWidth={S} /></StatusIcon>
            </StatusRight>
          </StatusBar>
          <LeftMeter />
          <Meter />
          <Pointer width="12" height="15" viewBox="0 0 12 15" fill="#f3f4f7" stroke="#333"><path d="M1 1v10l2.500-2 2 4.500 2-1-2-4.500H9z" /></Pointer>
        </AppWin>
        <Taskbar>
          <TaskCell $w={45}>
            <svg width="15" height="15" viewBox="0 0 16 16" fill="#f2f4f7"><path d="M0 2.200 6.800 1.200v6.400H0zM7.600 1.100 16 0v7.600H7.600zM0 8.400h6.800v6.400L0 13.800zM7.600 8.400H16V16l-8.400-1.100z" /></svg>
          </TaskCell>
          <TaskCell $w={48}>
            <svg width="22" height="22" viewBox="0 0 22 22" fill="#f5f5f5"><path d="M11 10C6 10 4 7 5 3c1-2 5-3 7-1s0 5-1 8zM12 11c0-5 3-7 7-6 2 1 3 5 1 7s-5 0-8-1zM11 12c5 0 7 3 6 7-1 2-5 3-7 1s0-5 1-8zM10 11c0 5-3 7-7 6-2-1-3-5-1-7s5 0 8 1z" /></svg>
          </TaskCell>
          <TaskSearch>
            <TaskInput><IEIcon c="#2f8fe0" ring="#8cc8f2" /><Micro />震中磨西镇居民</TaskInput>
            <TaskGo>搜索一下</TaskGo>
          </TaskSearch>
          <TaskDiv />
          <AppSlot $w={38}><IEIcon /></AppSlot>
          <AppSlot $w={38} $ml={9} $line><GreenE /></AppSlot>
          <AppSlot $w={38} $ml={9} $line><Folder /></AppSlot>
          <AppSlot $w={38} $ml={8} $line><Bandit /></AppSlot>
          <AppSlot $w={45} $ml={6} $line $active><WpsW s={22} /></AppSlot>
          <TaskRight>
            <TaskCell $w={26}>
              <svg width="22" height="18" viewBox="0 0 22 18"><circle cx="14" cy="7" r="5.500" fill="#f5b63a" /><path d="M5 17a4 4 0 0 1 0-8 5 5 0 0 1 9-1 4.500 4.500 0 0 1 3 9z" fill="#e4eaf1" /></svg>
            </TaskCell>
            <Temp>29°C</Temp>
            <WeatherStack><span>71℃</span><span>多云</span><span>CPU温度</span></WeatherStack>
            <TrayCell><Bandit s={15} bg="#d92020" /></TrayCell>
            <TrayCell><Rounded $bg="#3d8fd8" $w={11} $h={14}><Usb size={9} /></Rounded></TrayCell>
            <TrayCell><Rounded $bg="#1975c9" $w={14} $h={15}>C</Rounded></TrayCell>
            <TrayCell><svg width="15" height="15" viewBox="0 0 15 15" fill="#fff" stroke="#2f8ff2" strokeWidth="2"><path d="M1.500 3l6-1.500 6 1.500v5c0 3-3 4.500-6 6-3-1.500-6-3-6-6z" /></svg></TrayCell>
            <TrayCell><GreenE s={14} /></TrayCell>
            <TrayCell><WifiFan /></TrayCell>
            <TrayCell><Rounded $bg="#2a3a30" $w={15} $h={13}><Rounded $bg="#6aa52d" $w={10} $h={7} $r={3} /></Rounded></TrayCell>
            <TrayCell><Penguin /></TrayCell>
            <TrayCell><Penguin /></TrayCell>
            <TrayCell><Rounded $bg="#dfe3e8" $w={15} $h={8} $r={1} /></TrayCell>
            <TrayCell><Rounded $bg="#0f7ce0" $w={11} $h={15} $r={5}><Bluetooth size={10} /></Rounded></TrayCell>
            <TrayCell><Line d="M5 1h5v3h1v11H4V4h1zM13 12v3" c="#c5ccd4" w={1.1} /></TrayCell>
            <TrayCell><Rounded $bg="#2f9e3f" $w={14} $h={14} $r={7} $fg="#f2d229">+</Rounded></TrayCell>
            <TrayCell><Volume1 size={14} color="#aab4bf" strokeWidth={1.3} /></TrayCell>
            <TrayCell><Letter $size={12}>中</Letter></TrayCell>
            <TaskCell $w={26}><Rounded $bg="#2f8ff2" $w={15} $h={15}>Q</Rounded></TaskCell>
            <Clock><span>10:32 周三</span><span>2022/9/7</span></Clock>
            <DeskBtn />
          </TaskRight>
        </Taskbar>
        <BlackGap />
        <Player>
          <ProgressRow>
            <TimeLeft>0:06:07</TimeLeft>
            <Bar>
              <Fill style={{ width: '92.2%' }} />
              <Knob />
            </Bar>
            <TimeRight>0:02:25</TimeRight>
          </ProgressRow>
          <ControlRow>
            <Title>springboot138宠物领养系统含文档附源码</Title>
            <Ctl><Shuffle size={18} strokeWidth={1.2} /></Ctl>
            <Ctl><SkipBack size={16} fill="currentColor" strokeWidth={1.4} /></Ctl>
            <Ctl><Seek label="10" /></Ctl>
            <Ctl $w={56}><PlayRing><PlayCore><Play size={22} fill="#fff" strokeWidth={1} /></PlayCore></PlayRing></Ctl>
            <Ctl $w={46}><Seek label="30" flip /></Ctl>
            <Ctl $dim><SkipForward size={16} fill="currentColor" strokeWidth={1.4} /></Ctl>
            <Ctl><Line s={18} vb={18} w={1.2} d="M3 12V8a3 3 0 0 1 3-3h9M12 2l3 3-3 3M15 6v4a3 3 0 0 1-3 3H3M6 10l-3 3 3 3M3 2l12 14" /></Ctl>
            <ControlRight>
              <Ctl><svg width="18" height="16" viewBox="0 0 18 16" fill="none" stroke="currentColor" strokeWidth="1.2"><rect x="1.500" y="1.500" width="15" height="13" rx="2" /><path d="M4 11h4M10 11h4" /></svg></Ctl>
              <Ctl><Volume2 size={18} strokeWidth={1.2} /></Ctl>
              <Ctl><Maximize2 size={17} strokeWidth={1.2} /></Ctl>
              <Ctl><Line s={17} vb={17} w={1.2} d="M2 7V2h6M11 2h4v13H8M2 9v6M8 2v5h7M2 15l4-4M6 14v-3H3" /></Ctl>
              <Ctl><MoreHorizontal size={17} strokeWidth={2} /></Ctl>
            </ControlRight>
          </ControlRow>
        </Player>
        <Watermark>CSDN @QQ3295391197</Watermark>
      </Root>
    </>
  );
}
